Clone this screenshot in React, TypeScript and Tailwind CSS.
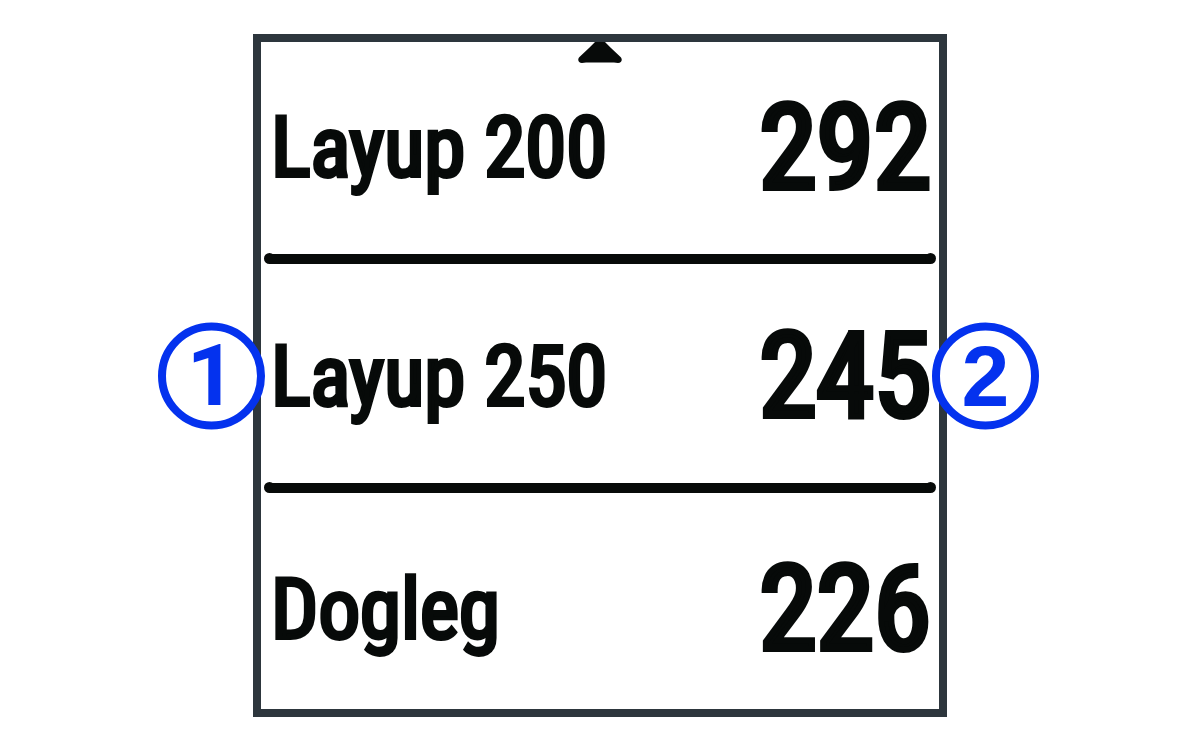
type Target = { name: string; yards: number; rowClass: string };

const targets: Target[] = [
  { name: "Layup 200", yards: 292, rowClass: "h-[211px]" },
  { name: "Layup 250", yards: 245, rowClass: "h-[218px] pt-1.5" },
  { name: "Dogleg", yards: 226, rowClass: "h-[216px] pt-4" },
];

const badgeBase =
  "absolute top-1/2 flex size-[107px] -translate-y-1/2 items-center justify-center rounded-full border-8 border-[#0432ee] bg-white text-[86px] leading-none font-bold text-[#0432ee]";

function Divider() {
  return (
    <div className="mx-[3px] flex h-[11px] items-center">
      <span className="size-[11px] rounded-full bg-[#070a09]" />
      <span className="-mx-[6px] h-[10px] flex-1 bg-[#070a09]" />
      <span className="size-[11px] rounded-full bg-[#070a09]" />
    </div>
  );
}

export default function App() {
  return (
    <main className="flex min-h-screen flex-col items-center bg-white px-4 pt-[34px] pb-8">
      <section className="relative w-full max-w-[694px] border-8 border-[#2d363d] bg-white text-[#070a09]">
        <svg
          className="absolute top-0 left-1/2 h-[22px] w-11 -translate-x-1/2"
          viewBox="0 0 44 22"
          aria-hidden="true"
        >
          <path
            d="M17 0H27L33 6L42 14.500C45 17 44 21 40 21L36 20.500H8L4 21C0 21 -1 17 2 14.500L11 6Z"
            fill="#070a09"
          />
        </svg>
        <ul className="font-['Roboto_Condensed','Roboto',sans-serif] leading-none">
          {targets.map((target, index) => (
            <li key={target.name}>
              {index > 0 && <Divider />}
              <div className={`flex items-center justify-between pr-2 pl-2.5 ${target.rowClass}`}>
                <span className="text-[83px] [-webkit-text-stroke:4px_#070a09]">
                  {target.name}
                </span>
                <span className="text-[116px] [-webkit-text-stroke:6px_#070a09]">
                  {target.yards}
                </span>
              </div>
            </li>
          ))}
        </ul>
        <span className={`${badgeBase} -left-[103px] font-['Roboto',sans-serif]`}>1</span>
        <span className={`${badgeBase} -right-[100px] font-['Liberation_Sans',sans-serif]`}>2</span>
      </section>
    </main>
  );
}
